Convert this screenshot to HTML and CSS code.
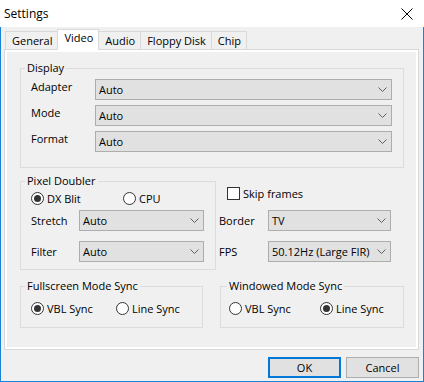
FILE: index.html
```html
<!DOCTYPE html>
<html lang="en">
<head>
    <meta charset="UTF-8">
    <title>Settings</title>
    <link rel="stylesheet" href="styles.css">
</head>
<body>
    <div class="window">
        <div class="titlebar">
            <span class="title">Settings</span>
            <svg class="close" width="12" height="12" viewBox="0 0 12 12">
                <path d="M0.5 0.5 L11.5 11.5 M11.5 0.5 L0.5 11.5" stroke="#000" stroke-width="1" fill="none"/>
            </svg>
        </div>
        <div class="client">
            <div class="tabs">
                <div class="tab">General</div>
                <div class="tab active">Video</div>
                <div class="tab">Audio</div>
                <div class="tab">Floppy Disk</div>
                <div class="tab">Chip</div>
            </div>
            <div class="panel">
                <fieldset class="group display">
                    <legend>Display</legend>
                    <div class="group-body">
                        <div class="row">
                            <span class="label">Adapter</span>
                            <div class="combo"><span>Auto</span><svg class="chev" width="9" height="5" viewBox="0 0 9 5"><path d="M0.5 0.5 L4.5 4.5 L8.5 0.5" stroke="#606060" fill="none"/></svg></div>
                        </div>
                        <div class="row">
                            <span class="label">Mode</span>
                            <div class="combo"><span>Auto</span><svg class="chev" width="9" height="5" viewBox="0 0 9 5"><path d="M0.5 0.5 L4.5 4.5 L8.5 0.5" stroke="#606060" fill="none"/></svg></div>
                        </div>
                        <div class="row">
                            <span class="label">Format</span>
                            <div class="combo"><span>Auto</span><svg class="chev" width="9" height="5" viewBox="0 0 9 5"><path d="M0.5 0.5 L4.5 4.5 L8.5 0.5" stroke="#606060" fill="none"/></svg></div>
                        </div>
                    </div>
                </fieldset>

                <div class="middle">
                    <fieldset class="group doubler">
                        <legend>Pixel Doubler</legend>
                        <div class="group-body">
                            <div class="radios">
                                <label class="radio checked"><span class="dot"></span>DX Blit</label>
                                <label class="radio"><span class="dot"></span>CPU</label>
                            </div>
                            <div class="row">
                                <span class="label">Stretch</span>
                                <div class="combo"><span>Auto</span><svg class="chev" width="9" height="5" viewBox="0 0 9 5"><path d="M0.5 0.5 L4.5 4.5 L8.5 0.5" stroke="#606060" fill="none"/></svg></div>
                            </div>
                            <div class="row">
                                <span class="label">Filter</span>
                                <div class="combo"><span>Auto</span><svg class="chev" width="9" height="5" viewBox="0 0 9 5"><path d="M0.5 0.5 L4.5 4.5 L8.5 0.5" stroke="#606060" fill="none"/></svg></div>
                            </div>
                        </div>
                    </fieldset>
                    <div class="side">
                        <label class="check"><span class="box"></span>Skip frames</label>
                        <div class="row">
                            <span class="label">Border</span>
                            <div class="combo"><span>TV</span><svg class="chev" width="9" height="5" viewBox="0 0 9 5"><path d="M0.5 0.5 L4.5 4.5 L8.5 0.5" stroke="#606060" fill="none"/></svg></div>
                        </div>
                        <div class="row">
                            <span class="label">FPS</span>
                            <div class="combo"><span>50.12Hz (Large FIR)</span><svg class="chev" width="9" height="5" viewBox="0 0 9 5"><path d="M0.5 0.5 L4.5 4.5 L8.5 0.5" stroke="#606060" fill="none"/></svg></div>
                        </div>
                    </div>
                </div>

                <div class="syncs">
                    <fieldset class="group sync fullscreen">
                        <legend>Fullscreen Mode Sync</legend>
                        <div class="group-body">
                            <div class="radios">
                                <label class="radio checked"><span class="dot"></span>VBL Sync</label>
                                <label class="radio"><span class="dot"></span>Line Sync</label>
                            </div>
                        </div>
                    </fieldset>
                    <fieldset class="group sync windowed">
                        <legend>Windowed Mode Sync</legend>
                        <div class="group-body">
                            <div class="radios">
                                <label class="radio"><span class="dot"></span>VBL Sync</label>
                                <label class="radio checked"><span class="dot"></span>Line Sync</label>
                            </div>
                        </div>
                    </fieldset>
                </div>
            </div>
            <div class="buttons">
                <button class="btn default">OK</button>
                <button class="btn">Cancel</button>
            </div>
        </div>
    </div>
</body>
</html>
```

FILE: styles.css
```css
* {
    box-sizing: border-box;
}

body {
    margin: 0;
    font-family: 'Open Sans', 'Liberation Sans', sans-serif;
    font-size: 11px;
    color: #000;
    background: #fff;
}

.window {
    width: 424px;
    height: 382px;
    display: flex;
    flex-direction: column;
}

.titlebar {
    height: 27px;
    background: #fff;
    display: flex;
    align-items: center;
    justify-content: space-between;
    padding: 0 11px 0 4px;
}

.title {
    font-size: 12px;
}

.client {
    flex: 1;
    background: #f0f0f0;
    border: 1px solid #1883d7;
    border-top: none;
    padding-top: 2px;
    display: flex;
    flex-direction: column;
}

/* tab strip */
.tabs {
    display: flex;
    align-items: flex-end;
    height: 20px;
    padding-left: 4px;
    position: relative;
    z-index: 1;
}

.tab {
    height: 18px;
    line-height: 16px;
    padding: 1px 5px 0 6px;
    border: 1px solid #d9d9d9;
    border-bottom: none;
    background: #f0f0f0;
    margin-right: -1px;
}

.tab.active {
    height: 21px;
    margin-bottom: -1px;
    background: #fff;
    line-height: 14px;
    padding-top: 1px;
    position: relative;
}

.panel {
    margin-left: 3px;
    width: 415px;
    height: 301px;
    border: 1px solid #d9d9d9;
    box-shadow: inset 0 0 0 2px #fff;
    padding: 0 14px 0 15px;
}

/* group boxes */
.group {
    margin: 0;
    padding: 0;
    border: 1px solid #dcdcdc;
    min-width: 0;
}

.group legend {
    padding: 0 2px;
    margin-left: 4px;
    line-height: 14px;
}

.display {
    margin-top: 11px;
}

.display .group-body {
    padding: 4px 11px 15px 10px;
    display: flex;
    flex-direction: column;
    gap: 5px;
}

.row {
    display: flex;
    align-items: center;
}

.display .label {
    width: 64px;
    padding-bottom: 6px;
}

.combo {
    flex: 1;
    height: 21px;
    border: 1px solid #adadad;
    background: #e1e1e1;
    display: flex;
    align-items: center;
    justify-content: space-between;
    padding: 0 4px 0 3px;
}

.middle {
    display: flex;
    gap: 3px;
    margin-top: 6px;
}

.doubler {
    width: 196px;
}

.doubler .group-body {
    padding: 3px 11px 7px 10px;
}

.doubler .label {
    width: 48px;
}

.doubler .row {
    margin-top: 10px;
}

.doubler .radios + .row {
    margin-top: 5px;
}

.radios {
    display: flex;
    height: 14px;
}

.radio {
    display: flex;
    align-items: center;
    gap: 3px;
    height: 14px;
}

.dot {
    width: 13px;
    height: 13px;
    border: 1px solid #333;
    border-radius: 50%;
    background: #fff;
    display: flex;
    align-items: center;
    justify-content: center;
}

.radio.checked .dot::after {
    content: "";
    width: 7px;
    height: 7px;
    border-radius: 50%;
    background: #333;
}

.doubler .radio:first-child {
    width: 92px;
}

.fullscreen .radio:first-child {
    width: 85px;
}

.windowed .radio:first-child {
    width: 91px;
}

.side {
    width: 172px;
    padding-top: 12px;
}

.side .label {
    width: 49px;
}

.side .row {
    margin-top: 10px;
}

.check {
    display: flex;
    align-items: center;
    gap: 3px;
    height: 14px;
    margin-left: 8px;
}

.box {
    width: 13px;
    height: 13px;
    border: 1px solid #333;
    background: #fff;
}

.syncs {
    display: flex;
    gap: 17px;
    margin-top: 9px;
}

.fullscreen {
    width: 183px;
}

.windowed {
    width: 184px;
}

.fullscreen .group-body {
    padding: 8px 0 12px 10px;
}

.windowed .group-body {
    padding: 8px 0 12px 8px;
}

.windowed legend {
    margin-left: 6px;
}

/* dialog buttons */
.buttons {
    display: flex;
    justify-content: flex-end;
    gap: 5px;
    margin-top: 7px;
    padding-right: 4px;
}

.btn {
    width: 73px;
    height: 21px;
    padding: 0;
    border: 1px solid #adadad;
    background: #e1e1e1;
    font: inherit;
    color: #000;
}

.btn.default {
    border: 2px solid #0078d7;
}
```
